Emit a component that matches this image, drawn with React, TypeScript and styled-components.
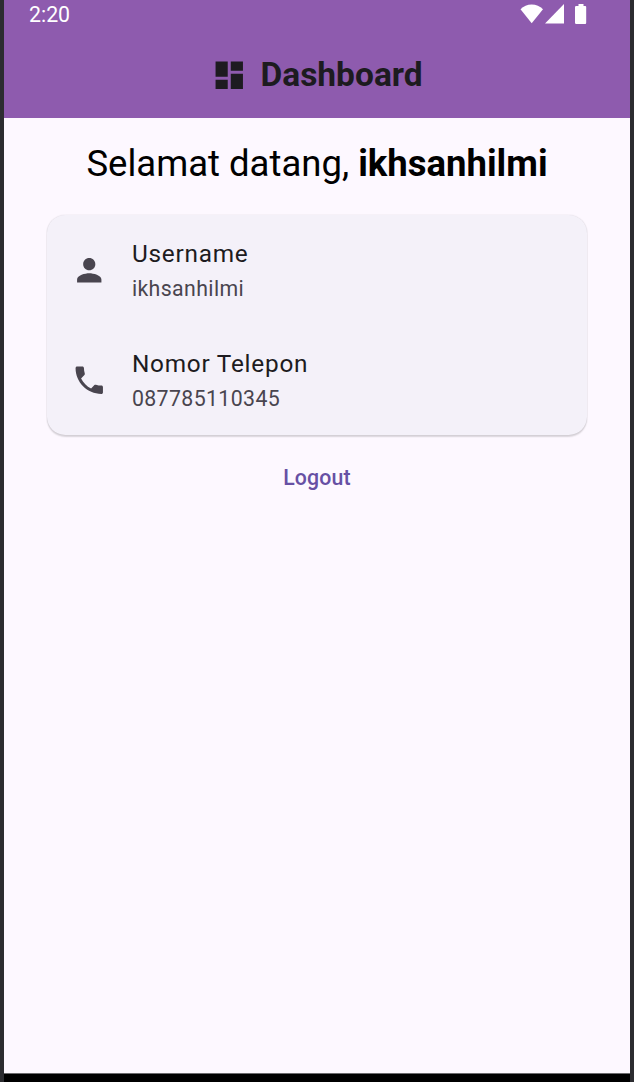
import React from 'react';
import styled, { createGlobalStyle } from 'styled-components';

const GlobalStyle = createGlobalStyle`
  body {
    margin: 0;
    background: #2c2c30;
    font-family: Roboto, "Liberation Sans", sans-serif;
  }
`;

const Screen = styled.div`
  box-sizing: border-box;
  display: flex;
  flex-direction: column;
  height: 1082px;
  margin: 0 4px;
  background: #fdf8ff;
`;

const Header = styled.header`
  flex: none;
  display: flex;
  flex-direction: column;
  height: 118px;
  background: #8e5bae;
`;

const StatusBar = styled.div`
  display: flex;
  justify-content: space-between;
  height: 32px;
  padding: 0 41px 0 25px;
  color: #fff;
  font-size: 21.3px;
  line-height: 30px;
`;

const StatusIcons = styled.svg`
  display: block;
  width: 70px;
  height: 28px;
  fill: #fff;
`;

const AppBar = styled.div`
  display: flex;
  align-items: center;
  justify-content: center;
  gap: 12.6px;
  height: 86px;
  color: #1d1b20;
`;

const Title = styled.h1`
  margin: 0;
  font-size: 33.5px;
  font-weight: 700;
  line-height: 42px;
`;

const Icon = styled.svg`
  flex: none;
  display: block;
  width: 36.5px;
  height: 36.5px;
  fill: currentColor;
`;

const Content = styled.main`
  flex: 1;
  display: flex;
  flex-direction: column;
  align-items: center;
  padding: 24px 43px 0;
`;

const Greeting = styled.p`
  margin: 0 0 30.4px;
  color: #000;
  font-size: 36.5px;
  line-height: 43px;
  white-space: nowrap;
`;

const Card = styled.section`
  align-self: stretch;
  border-radius: 18.3px;
  background: #f4f1f9;
  box-shadow: 0 1.5px 1.5px rgba(0, 0, 0, 0.14), 0 0 1.5px rgba(0, 0, 0, 0.14);
`;

const Tile = styled.div`
  box-sizing: border-box;
  display: flex;
  align-items: center;
  gap: 24.4px;
  height: 109.6px;
  padding: 0 24px;
  color: #49454f;
`;

const TileText = styled.div`
  padding-top: 1px;
`;

const Label = styled.div`
  color: #1d1b20;
  font-size: 24.35px;
  letter-spacing: 0.77px;
  line-height: 36.5px;
`;

const Value = styled.div`
  font-size: 21.3px;
  letter-spacing: 0.38px;
  line-height: 33px;
`;

const LogoutButton = styled.button`
  margin-top: 22.4px;
  padding: 6px 18px;
  border: 0;
  background: none;
  color: #6750a4;
  font: 500 21.3px/30px Roboto, "Liberation Sans", sans-serif;
  letter-spacing: 0.15px;
`;

const NavigationEdge = styled.footer`
  flex: none;
  height: 8px;
  border-top: 1px solid #6b6a6d;
  background: #000;
`;

const tiles = [
  {
    label: 'Username',
    value: 'ikhsanhilmi',
    path: 'M12 12c2.21 0 4-1.79 4-4s-1.79-4-4-4-4 1.79-4 4 1.79 4 4 4zm0 2c-2.67 0-8 1.34-8 4v2h16v-2c0-2.66-5.33-4-8-4z',
  },
  {
    label: 'Nomor Telepon',
    value: '087785110345',
    path: 'M6.62 10.79c1.44 2.83 3.76 5.14 6.59 6.59l2.2-2.2c.27-.27.67-.36 1.02-.24 1.12.37 2.33.57 3.57.57.55 0 1 .45 1 1V20c0 .55-.45 1-1 1-9.39 0-17-7.61-17-17 0-.55.45-1 1-1h3.5c.55 0 1 .45 1 1 0 1.25.2 2.45.57 3.57.11.35.03.74-.25 1.02l-2.2 2.2z',
  },
];

export default function App() {
  return (
    <>
      <GlobalStyle />
      <Screen>
        <Header>
          <StatusBar>
            <span>2:20</span>
            <StatusIcons viewBox="0 0 70 28">
              <path d="M1.5 9.2Q6 4.4 12.7 4.4T24 9.2L12.7 23.2z" />
              <path d="M45 4v19.6H26z" />
              <path d="M59.5 4h5v2h1.7q1 0 1 1v15.7q0 1.2-1 1.2h-9q-1.2 0-1.2-1.2V7q0-1 1.2-1h2.3z" />
            </StatusIcons>
          </StatusBar>
          <AppBar>
            <Icon viewBox="0 0 24 24">
              <path d="M3 13h8V3H3v10zm0 8h8v-6H3v6zm10 0h8V11h-8v10zm0-18v6h8V3h-8z" />
            </Icon>
            <Title>Dashboard</Title>
          </AppBar>
        </Header>
        <Content>
          <Greeting>
            Selamat datang, <b>ikhsanhilmi</b>
          </Greeting>
          <Card>
            {tiles.map((tile) => (
              <Tile key={tile.label}>
                <Icon viewBox="0 0 24 24">
                  <path d={tile.path} />
                </Icon>
                <TileText>
                  <Label>{tile.label}</Label>
                  <Value>{tile.value}</Value>
                </TileText>
              </Tile>
            ))}
          </Card>
          <LogoutButton>Logout</LogoutButton>
        </Content>
        <NavigationEdge />
      </Screen>
    </>
  );
}
